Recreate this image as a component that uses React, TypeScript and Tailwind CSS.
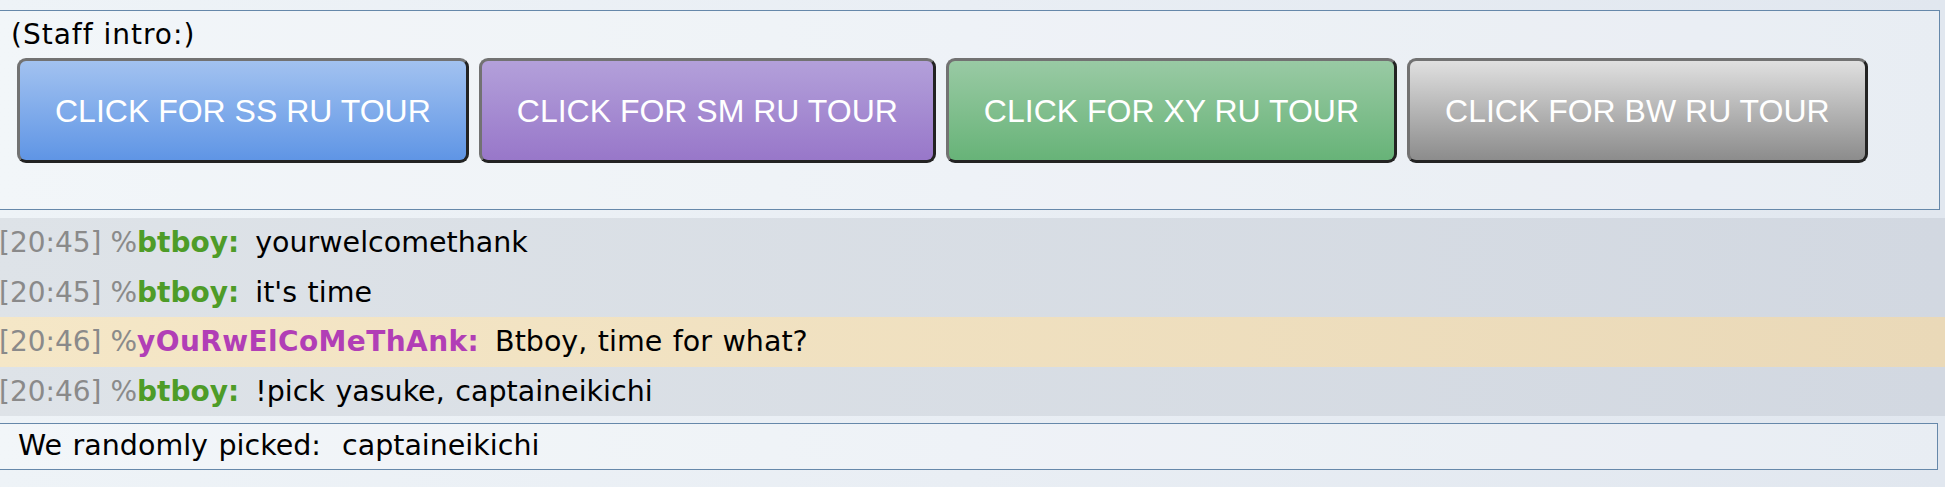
import React from "react";

const buttons = [
  { label: "CLICK FOR SS RU TOUR", cls: "bg-linear-to-b from-[#a2c2f0] to-[#5f95e5]" },
  { label: "CLICK FOR SM RU TOUR", cls: "bg-linear-to-b from-[#b3a0da] to-[#9877c9]" },
  { label: "CLICK FOR XY RU TOUR", cls: "bg-linear-to-b from-[#99caa4] to-[#67b378]" },
  { label: "CLICK FOR BW RU TOUR", cls: "bg-linear-to-b from-[#e0e0e0] to-[#8c8c8c]" },
];

type Msg = { time: string; name: string; text: string; hl?: boolean; color: string; wide?: boolean };

const msgs: Msg[] = [
  { time: "[20:45]", name: "btboy:", text: "yourwelcomethank", color: "text-[#4e9c28]" },
  { time: "[20:45]", name: "btboy:", text: "it's time", color: "text-[#4e9c28]" },
  { time: "[20:46]", name: "yOuRwElCoMeThAnk:", text: "Btboy, time for what?", hl: true, color: "text-[#b13eb6]", wide: true },
  { time: "[20:46]", name: "btboy:", text: "!pick yasuke, captaineikichi", color: "text-[#4e9c28]" },
];

export default function App() {
  return (
    <div className="w-[1945px] h-[487px] overflow-hidden bg-linear-to-r from-[#eef3f7] via-[#e9eef4] to-[#e1e7ef] font-['DejaVu_Sans',Verdana,sans-serif] text-[28px] text-black">
      <div className="pt-[10px]">
        <div className="mr-[5px] border border-l-0 border-[#6688aa] bg-white/25 pl-[11px] pt-[8px] pb-[46px]">
          <div className="leading-[32px] tracking-[1px]">(Staff intro:)</div>
          <div className="mt-[7px] ml-[6px] flex gap-[10px]">
            {buttons.map((b) => (
              <div
                key={b.label}
                className={`${b.cls} h-[105px] px-[35px] flex items-center rounded-[9px] border-[3px] border-t-[#727272] border-l-[#727272] border-r-[#232323] border-b-[#232323] text-white text-[32px] font-['Liberation_Sans',Arial,sans-serif] whitespace-nowrap`}
              >
                {b.label}
              </div>
            ))}
          </div>
        </div>
      </div>
      <div className="mt-[8px]">
        {msgs.map((m, i) => (
          <div
            key={i}
            className={`${m.hl ? "bg-linear-to-r from-[#f5e7c7] to-[#ead9b8]" : "bg-linear-to-r from-[#dee3e8] to-[#d2d8e1]"} py-[8px] leading-[33.5px] whitespace-nowrap -ml-[1px]`}
          >
            <span className="text-[#8a8a8a]">{m.time} %</span>
            <strong className={`${m.color} font-bold ${m.wide ? "tracking-[0.4px]" : ""}`}>{m.name}</strong>
            <span className="ml-[16px] text-[28.5px] [word-spacing:1.5px]">{m.text}</span>
          </div>
        ))}
      </div>
      <div className="mt-[7px] mr-[7px] border border-l-0 border-[#6688aa] bg-white/25 pl-[18px] pt-[6px] pb-[7px] leading-[32px] whitespace-pre text-[28.5px] [word-spacing:1.5px]">
        {"We randomly picked:  captaineikichi"}
      </div>
    </div>
  );
}
